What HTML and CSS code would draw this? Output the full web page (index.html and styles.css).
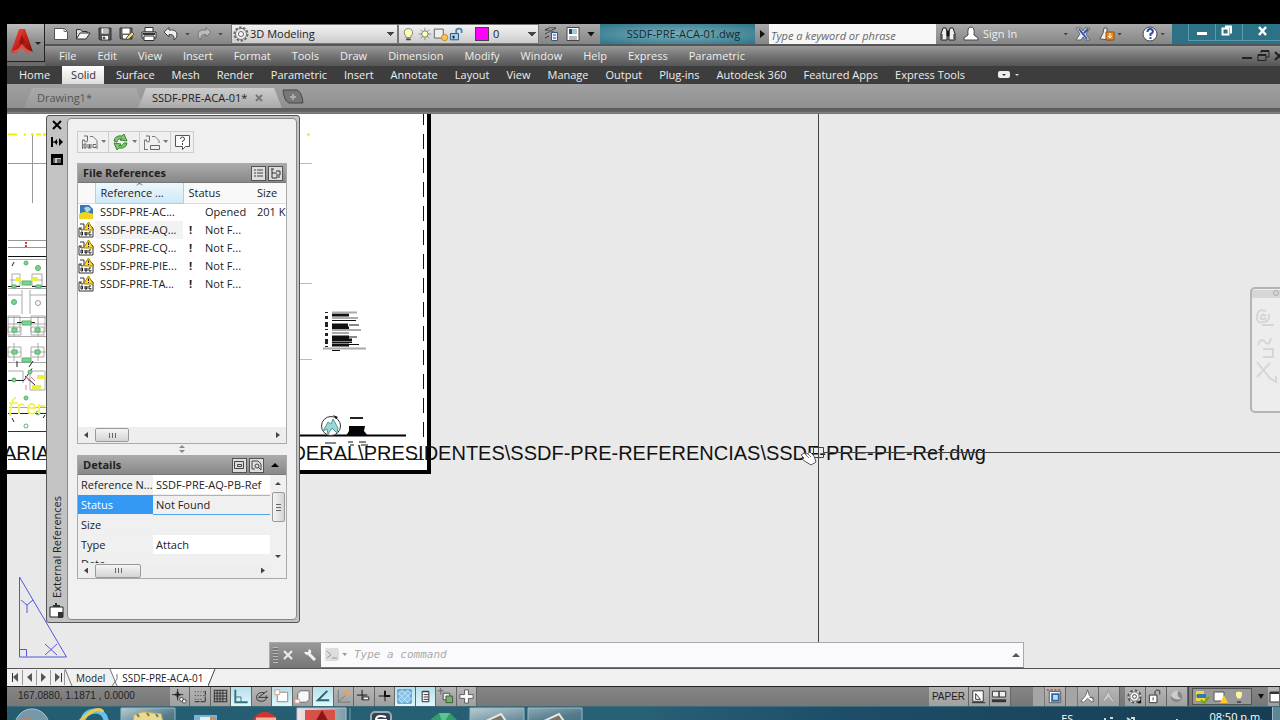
FILE: index.html
```html
<!DOCTYPE html>
<html lang="en">
<head>
<meta charset="utf-8">
<title>SSDF-PRE-ACA-01.dwg</title>
<link rel="stylesheet" href="styles.css">
</head>
<body>
<svg class="defs" width="0" height="0" aria-hidden="true">
  <symbol id="dwg" viewBox="0 0 16 16">
    <path d="M1 15V6h3M9 3h3l3 3v9H1" fill="#fff" stroke="#333"/>
    <path d="M2 2h4v4q0 2-2 2t-2-2" fill="none" stroke="#333"/>
    <path d="M3 10v3h1.500V10zM7 10v3h2v-3M8 10v3M13 10h-2v3h2v-1" fill="none" stroke="#222"/>
    <path d="M10.500 0 15.500 8h-10z" fill="#ffd91a" stroke="#a58100"/>
    <path d="M10.500 2.500v2.500M10.500 6v1" stroke="#222"/>
  </symbol>
</svg>
<div class="app">
  <header class="top">
    <button class="app-button" aria-label="Application menu">
      <svg width="36" height="34" viewBox="0 0 36 34"><defs><linearGradient id="red" x2="1" y2="1"><stop offset="0" stop-color="#ef5a48"/><stop offset=".5" stop-color="#c92018"/><stop offset="1" stop-color="#70110d"/></linearGradient></defs><path d="M12 3h6l8 23-7-3-4-4-6 8-5-1z" fill="url(#red)"/><path d="M4 25q7 0 11-7 3 5 11 8l-6 1-5-5-7 5z" fill="#de5143"/><path d="M15 9l-3 8q3 2 6 0z" fill="#8e1713"/><path d="M28 16h6l-3 3z" fill="#222"/></svg>
    </button>
    <div class="title-row">
      <div class="quick">
        <button aria-label="New"><svg viewBox="0 0 16 16"><path d="M1.500 2.500h10l3 3v8h-13z" fill="#fff" stroke="#555"/><path d="M11 2.500v3h3.500" fill="none" stroke="#777"/></svg></button>
        <button aria-label="Open"><svg viewBox="0 0 16 16"><path d="M1.500 13V3.500h4l1.500 2h5v2" fill="#ddd" stroke="#333"/><path d="M1.500 13 5 7h10l-4 6z" fill="#f8f8f8" stroke="#333"/></svg></button>
        <button aria-label="Save"><svg viewBox="0 0 16 16"><path d="M2 2h12v12H3l-1-1z" fill="#555" stroke="#333"/><path d="M4.500 2.500h7v5h-7zM5 10h6v3.500H5z" fill="#fff"/><path d="M6 11h2v2H6zM6 4h5M6 6h5" stroke="#777"/></svg></button>
        <button aria-label="Save As"><svg viewBox="0 0 16 16"><path d="M1 2h12v11H2l-1-1z" fill="#666" stroke="#333"/><path d="M3.500 2.500h7v5h-7zM4 9h6v3.500H4z" fill="#fff"/><path d="m7 14 1-3 5-5 2 2-5 5z" fill="#f1d38b" stroke="#665028"/></svg></button>
        <button aria-label="Print"><svg viewBox="0 0 16 16"><path d="M4 1.500h8V6H4z" fill="#fff" stroke="#333"/><path d="M1 6h14v6H1z" fill="#eee" stroke="#333"/><path d="M3 10h10v4.500H3z" fill="#fff" stroke="#333"/><path d="M2 8h12" stroke="#333" stroke-width="2"/></svg></button>
        <button aria-label="Undo"><svg viewBox="0 0 16 16"><path d="M1 6 6 1.500V4q8-1 8 5 0 3-3 5 1-6-5-5.500V11z" fill="#eee" stroke="#444"/></svg></button>
        <i class="dot"></i>
        <button aria-label="Redo"><svg viewBox="0 0 16 16"><path d="m15 6-5-4.500V4q-8-1-8 5 0 3 3 5-1-6 5-5.500V11z" fill="#bbb" stroke="#777"/></svg></button>
        <i class="dot"></i>
      </div>
      <div class="combo workspace">
        <svg width="18" height="18" viewBox="0 0 18 18"><circle cx="9" cy="9" r="6.500" fill="#eee" stroke="#666" stroke-width="2" stroke-dasharray="2.400 1.600"/><circle cx="9" cy="9" r="5.500" fill="#eee" stroke="#777"/><circle cx="9" cy="9" r="2.500" fill="#fff" stroke="#666"/></svg>
        <select aria-label="Workspace"><option>3D Modeling</option></select>
      </div>
      <div class="combo layer">
        <svg width="85" height="18" viewBox="0 0 85 18"><path d="M8 13q0-2-2-4-1-6 4.500-6T15 9q-2 2-2 4z" fill="#ffffb0" stroke="#777"/><path d="M8 15h5" stroke="#444" stroke-width="2"/><path d="M29 2v14M22 9h14M24 4l10 10M34 4 24 14" stroke="#888"/><circle cx="29" cy="9" r="3.500" fill="#ffffbb" stroke="#777"/><path d="M39.500 3.500h10v10h-10z" fill="#eee" stroke="#555"/><circle cx="51" cy="13" r="3.500" fill="#ffc447" stroke="#b98424"/><path d="M57.500 8.500h9v7h-9z" fill="#a9d2f1" stroke="#174c7b"/><path d="M64 8V5q0-2 3-2t3 2v3" fill="none" stroke="#4a83ae" stroke-width="2"/><path d="M61 11v3" stroke="#111" stroke-width="2"/></svg>
        <span class="swatch"></span>
        <select aria-label="Layer"><option>0</option></select>
      </div>
      <div class="quick second">
        <button aria-label="Layer properties"><svg viewBox="0 0 16 16"><path d="m2 4 4-2h7l-4 2zM2 8l4-2h5M2 12l4-2" fill="#eee" stroke="#333"/><path d="M8.500 6.500h6v8h-6z" fill="#eef" stroke="#335b7d"/><path d="M10 9h3M10 12h3" stroke="#357"/></svg></button>
        <button aria-label="Properties"><svg viewBox="0 0 16 16"><path d="M2 1.500h12v13H2z" fill="#fff" stroke="#444"/><path d="M4 3h3v5H4z" fill="#444"/><path d="M7 3h5v5H7z" fill="#9bcbe6"/><path d="M4 11h8M4 13h8" stroke="#777"/></svg></button>
        <i class="caret big"></i>
      </div>
      <div class="file-title">SSDF-PRE-ACA-01.dwg</div>
      <button class="search-arrow" aria-label="Collapse search"><svg width="14" height="20"><path d="m5 6 5 4-5 4z" fill="#111"/></svg></button>
      <input class="search" type="text" placeholder="Type a keyword or phrase" aria-label="Search">
      <div class="account">
        <button aria-label="Search"><svg viewBox="0 0 16 16"><path d="M3 2h3l1 4v8H1V8zM10 2h3l2 6v6H9V6z" fill="#eee" stroke="#222"/><path d="M7 5h2v5H7zM2 8v5M14 8v5" stroke="#222"/></svg></button>
        <button class="sign-in"><svg viewBox="0 0 16 16"><path d="M5 9Q4 1 8 1t3 8l4 3v2H1v-2z" fill="#fff" stroke="#444"/></svg>Sign In</button>
        <i class="dot"></i>
        <button aria-label="Exchange"><svg viewBox="0 0 16 16"><path d="M1 2h5l2 3 2-3h5l-4 6 4 6h-5l-2-3-2 3H1l4-6z" fill="#e9edf5" stroke="#666"/><path d="M4 3 12 13M13 3 9 7" stroke="#334eb0" stroke-width="2"/></svg></button>
        <button aria-label="Updates"><svg viewBox="0 0 16 16"><path d="M1 13 4 7l1-5h3v6l4 4v2z" fill="#eee" stroke="#555"/><path d="M7 6h8v8H7z" fill="#e78b23" stroke="#9e4e05"/><path d="M11 7v5M9 10l2 2 2-2" stroke="#fff" fill="none"/></svg></button>
        <i class="dot"></i>
        <button class="help" aria-label="Help"><svg viewBox="0 0 16 16"><circle cx="8" cy="8" r="7" fill="#fff" stroke="#444"/><path d="M5.500 6q0-3 2.700-3t2.700 2.500Q10.900 7 8.500 8v2M8.500 11v2" fill="none" stroke="#2d4cb0" stroke-width="2"/></svg></button>
        <i class="dot"></i>
      </div>
      <div class="window-buttons">
        <button aria-label="Minimize"><svg width="26" height="16"><path d="M8 8h10v3H8z" fill="#fff"/></svg></button>
        <button aria-label="Restore"><svg width="26" height="16"><path d="M9 2.500h6v7M6.500 4.500h6v6h-6z" fill="none" stroke="#fff" stroke-width="2"/></svg></button>
        <button aria-label="Close"><svg width="40" height="16"><path d="m16 3 7 8M23 3l-7 8" stroke="#fff" stroke-width="2.500"/></svg></button>
      </div>
    </div>
    <nav class="menu-row">
      <button>File</button><button>Edit</button><button>View</button><button>Insert</button><button>Format</button><button>Tools</button><button>Draw</button><button>Dimension</button><button>Modify</button><button>Window</button><button>Help</button><button>Express</button><button>Parametric</button>
      <svg class="mdi" width="38" height="18" viewBox="0 0 38 18"><path d="M0 11h10" stroke="#222" stroke-width="2"/><path d="M19 6V4h8v6h-3M16 7.500h8v6h-8z" fill="none" stroke="#222"/><path d="M16 8h8M19 4h8" stroke="#222" stroke-width="2"/><path d="m33 5 8 8M41 5l-8 8" stroke="#222" stroke-width="2"/></svg>
    </nav>
  </header>

  <nav class="ribbon">
    <button>Home</button><button class="on">Solid</button><button>Surface</button><button>Mesh</button><button>Render</button><button>Parametric</button><button>Insert</button><button>Annotate</button><button>Layout</button><button>View</button><button>Manage</button><button>Output</button><button>Plug-ins</button><button>Autodesk 360</button><button>Featured Apps</button><button>Express Tools</button>
    <svg width="26" height="12"><rect x="3" y="2" width="12" height="7" rx="2" fill="#eee"/><path d="M7 5h4l-2 2z" fill="#333"/><path d="M20 5h4l-2 2z" fill="#ddd"/></svg>
  </nav>

  <div class="doc-tabs">
    <button class="doc">Drawing1*</button>
    <button class="doc current">SSDF-PRE-ACA-01*<svg width="8" height="8"><path d="m1 1 6 6M7 1 1 7" stroke="#777" stroke-width="2"/></svg></button>
    <button class="new-doc" aria-label="New drawing"><svg width="22" height="16"><path d="M1 1h14q5 2 6 13H7Q2 12 1 1z" fill="#777" stroke="#484848"/><path d="M11 5v6M8 8h6" stroke="#aaa" stroke-width="2"/></svg></button>
  </div>

  <main class="canvas">
    <svg class="drawing" viewBox="7 114 1273 554" preserveAspectRatio="xMinYMin slice">
      <path d="M7 114h420v358H7z" fill="#fff"/>
      <g fill="none" stroke="#999">
        <path d="M8 163.500h40M32.500 135v68M8 240.500h40M8 247.500h40"/><path d="M299 163.500h13M299 283.500h13M299 359.500h13" stroke="#bbb"/>
      </g>
      <path d="M8 134.500h9M24 134.500h2M31 134.500h3M36 134.500h5M43 134.500h4M307 134.500h3" stroke="#eff000" stroke-width="2"/>
      <path d="M8 256.500h39" stroke="#111"/>
      <path d="M26 242v2M26 245v2" stroke="#e33" stroke-width="2"/>
      <path d="M8 259.500h39M8 288.500h39M8 317.500h39M8 336.500h39M8 362.500h39M12 274h8v12h-8zM32 274h10v12H32zM22 290v24M30 290v24M8 295h14M30 295h16M8 316h12v16H8zM31 316h14v16H31zM8 327h13v8H8zM31 327h13v8H31zM8 347h13v10H8zM31 347h13v10H31zM8 371h15v12M30 371h15v19H30zM9 407.500h38M10 280h10M33 280h10M8 324h13M30 324h16M8 352h13M30 352h16M14 316v20M38 316v20M14 343v18M38 343v18" fill="none" stroke="#aaa"/>
      <path d="M8 286.500h12M32 286.500h15M17 322.500h18M17 361v6M33 361l-4 6M8 380.500h16l8-12M25 376l10 9M8 413.500h39M12 266l2-4M12 418l2 4M43 418l2-3" fill="none" stroke="#222"/>
      <path d="M8 431.500h39" stroke="#333"/>
      <g fill="#74d98a" stroke="#5cae70"><circle cx="26" cy="263" r="2"/><circle cx="38" cy="268" r="2.500"/><circle cx="14" cy="302" r="2.500"/><circle cx="38" cy="303" r="2.500" fill="none" stroke="#999"/><path d="M22 281h9v4h-9zM12 285h4v3h-4zM36 285h5v3h-5zM22 321h9v4h-9zM12 328h5v4h-5zM35 328h5v4h-5zM22 358h9v4h-9zM12 350h5v4h-5zM35 350h5v4h-5z"/><circle cx="14" cy="380" r="2"/><circle cx="30" cy="372" r="2"/><circle cx="26" cy="398" r="2"/><circle cx="38" cy="413" r="2" fill="none"/><circle cx="26" cy="426" r="2" fill="none"/></g>
      <path d="M16 279h5M32 279h6M32 387h9M37 377h8" stroke="#ebef3d" stroke-width="4"/>
      <path d="M10 416q1-18 6-18M9 403h9M19 404v10M19 406q3-4 5 0M28 408h7q-1-5-4-4t-3 6 7 3M39 404v10M39 406h6" fill="none" stroke="#f3f35d" stroke-width="2"/>
      <path d="M26 376l3 5M31 377l4 4M26 385v5" stroke="#d6808e"/>
      <path d="M423.500 114v331" stroke="#111" stroke-dasharray="15 9" stroke-dashoffset="4"/>
      <path d="M429 114v360M7 472h424" fill="none" stroke="#000" stroke-width="4"/>
      <g stroke="#111" stroke-width="3"><path d="M332 315h17M332 325h16M332 328h17M332 337h17M332 340h20M332 345h17"/><path d="M332 320.500h24M349 325h10M348 337h9M332 342.500h20M349 344.500h10M332 350.500h8" stroke-width="1"/></g>
      <g stroke="#aaa" stroke-width="2"><path d="M332 312.500h25M332 318h26M332 330h29M332 333h17M323 348.500h43"/></g>
      <path d="M326.500 312v35" stroke="#222" stroke-width="3" stroke-dasharray="1 3 3 3 5 2"/>
      <path d="M299 435.500h107" stroke="#000" stroke-width="2"/>
      <circle cx="331" cy="426" r="9.500" fill="#fff" stroke="#333"/><path d="m323 431 5-9 3 2 2-5 5 9-1 5-5-5-4 6-1-5z" fill="#9ad6d4" stroke="#4b9b98"/><path d="m333 415 5 2-2 2z" fill="#111"/>
      <path d="M350 418h13" stroke="#222" stroke-width="2"/><path d="M349 426h16l-1 5 4 5h-22l3-5z" fill="#050505"/><path d="M325 443h11M348 442h5M359 442h7M350 445h4M361 445h7" stroke="#111"/>
      <path d="M8 459.500h416" stroke="#333" stroke-dasharray="17 8"/>
      <text class="model-text" x="3" y="460">ARIA</text>
      <text class="model-text" x="986" y="460" text-anchor="end">DERAL\PRESIDENTES\SSDF-PRE-REFERENCIAS\SSDF-PRE-PIE-Ref.dwg</text>
      <path d="M818.500 114v554" stroke="#444"/><path d="M824 452.500h456" stroke="#444"/><path d="M813.500 447.500h10v10h-10z" fill="none" stroke="#444"/>
      <path d="m801 455 3-2 3 1 3-2 4 4 2 6-5 3-5-3-4-3 2-1z" fill="#fff" stroke="#555"/><path d="m804 453 5 5M807 453l4 4" stroke="#777"/>
      <g fill="none" stroke="#5256dd"><path d="M19.500 577v80h47zM19.500 649.500h7v7M21 600l6 5 6-5M27 605v8M45 644l12 11M57 644l-12 11"/></g>
      <g><rect x="1251" y="288" width="40" height="124" rx="4" fill="#ededed" stroke="#b4b4b4" stroke-width="2"/><path d="M1252 290h28v8h-28z" fill="#d6d6d6"/><circle cx="1276" cy="293" r="2.500" fill="none" stroke="#aaa"/><path d="M1266 311q-8-3-9 5t7 6q6-1 5-8M1266 316q-4-3-5 1t5 1M1262 325h12M1258 345q3-8 7-3t6-4M1263 349h10v8h-10M1257 362l12 15M1270 363l-13 14M1268 377l8 5v-6" fill="none" stroke="#d6d6d6" stroke-width="2"/></g>
    </svg>

    <aside class="palette">
      <div class="palette-strip">
        <button aria-label="Close palette"><svg width="12" height="12"><path d="m2 2 8 8M10 2l-8 8" stroke="#000" stroke-width="2"/></svg></button>
        <button aria-label="Auto-hide"><svg width="12" height="12"><path d="M1 1v10" stroke="#000" stroke-width="2"/><path d="M1 6h6" stroke="#000"/><path d="M6 3v6L3 6zM8 2l4 4-4 4z" fill="#000"/></svg></button>
        <button aria-label="Palette properties"><svg width="12" height="12"><path d="M1 2h10v9H1z" fill="none" stroke="#000" stroke-width="2"/><path d="M1 4h10" stroke="#000" stroke-width="2"/><path d="M3 5v5M6 7h4M6 9h4" stroke="#000"/></svg></button>
        <span class="palette-name">External References</span>
        <svg width="16" height="16"><path d="M1 4h13v10H1z" fill="#fff" stroke="#222"/><path d="M4 4h7V2H8V0H6v2H4zM9 9h5v6H9z" fill="#333"/></svg>
      </div>
      <div class="palette-body">
        <div class="tools">
          <button aria-label="Attach DWG"><svg width="30" height="20"><path d="M4.500 17V8H7M12 4.500h3l4 4V17" fill="none" stroke="#777"/><path d="M6 4h3.500v4q0 2-1.500 2T6 8M6 12v4h2v-4zM10 12v4h3v-4M11.500 12v4M18 12.500h-3v3h3V14" fill="none" stroke="#666"/><path d="M23 8h5l-2 3z" fill="#777"/></svg></button>
          <button aria-label="Refresh"><svg width="30" height="20"><path d="M5 9q1-6 8-5l2-2 3 7-7-1 2-1Q9 6 8 10zM18 11q-1 6-8 5l-2 2-3-7 7 1-2 2q4 0 5-3z" fill="#7fc472" stroke="#3b8638"/><path d="M23 8h5l-2 3z" fill="#777"/></svg></button>
          <button aria-label="Change path"><svg width="30" height="20"><path d="M4.500 17V8H7M12 4.500h3l4 4V11M4 17.500h4" fill="none" stroke="#777"/><path d="M6 4h3.500v4q0 2-1.500 2T6 8M10.500 13.500h9v4h-9z" fill="none" stroke="#666"/><path d="M23 8h5l-2 3z" fill="#777"/></svg></button>
          <button aria-label="Help"><svg width="22" height="20"><path d="M4.500 3.500h14v11h-4l-3 3v-3h-7z" fill="#fff" stroke="#555"/><path d="M9.500 7q0-2 2-2t2 2-2 2v1M11.500 11v2" fill="none" stroke="#444"/></svg></button>
        </div>
        <section class="box refs">
          <h2>File References<span><button aria-label="List view"><svg width="13" height="13"><path d="M2 3h2M2 6h2M2 9h2M5 3h6M5 6h6M5 9h6" stroke="#444"/></svg></button><button aria-label="Tree view"><svg width="13" height="13"><path d="M3 2v9h5M3 6h5M2 2h3M7 4h4v4H7M7 10h4" fill="none" stroke="#333"/></svg></button></span></h2>
          <div class="list">
            <table>
              <thead><tr><th class="ic"></th><th class="name">Reference ...</th><th class="st">Status</th><th class="sz">Size</th></tr></thead>
              <tbody>
                <tr><td><svg width="16" height="16" viewBox="0 0 16 16"><path d="M2 1h9l4 4v10H2z" fill="#3a78b5"/><path d="M6 4q4-3 7 1-2 4-5 3z" fill="#a9d6ec"/><path d="M1 10q5-4 14 0v5H1z" fill="#f0d51f"/></svg></td><td>SSDF-PRE-AC...</td><td>Opened</td><td>201 KB</td></tr>
                <tr class="hover"><td><svg width="16" height="16"><use href="#dwg"/></svg></td><td>SSDF-PRE-AQ...</td><td><b>!</b>Not F...</td><td></td></tr>
                <tr><td><svg width="16" height="16"><use href="#dwg"/></svg></td><td>SSDF-PRE-CQ...</td><td><b>!</b>Not F...</td><td></td></tr>
                <tr><td><svg width="16" height="16"><use href="#dwg"/></svg></td><td>SSDF-PRE-PIE...</td><td><b>!</b>Not F...</td><td></td></tr>
                <tr><td><svg width="16" height="16"><use href="#dwg"/></svg></td><td>SSDF-PRE-TA...</td><td><b>!</b>Not F...</td><td></td></tr>
              </tbody>
            </table>
          </div>
          <div class="hbar"><i class="left"></i><span class="thumb"></span><i class="right"></i></div>
        </section>
        <div class="splitter"><svg width="8" height="10"><path d="M1 4l3-3 3 3zM1 6l3 3 3-3z" fill="#888"/></svg></div>
        <section class="box details">
          <h2>Details<span><button aria-label="Details view"><svg width="13" height="13"><path d="M1.500 2.500h9v7h-9zM4.500 5.500h4v2h-4z" fill="none" stroke="#444"/></svg></button><button aria-label="Preview"><svg width="13" height="13"><path d="M2 10V2h6l3 3v6M5 10H2" fill="none" stroke="#444"/><circle cx="7" cy="7" r="2" fill="none" stroke="#444"/><path d="m8 8 3 3" stroke="#444"/></svg></button><svg class="up" width="12" height="12"><path d="m2 8 4-4 4 4z" fill="#000"/></svg></span></h2>
          <div class="grid-wrap">
            <div class="grid">
              <div class="prop"><span>Reference N...</span><span class="white">SSDF-PRE-AQ-PB-Ref</span></div>
              <div class="prop sel"><span>Status</span><span>Not Found</span></div>
              <div class="prop"><span>Size</span><span></span></div>
              <div class="prop"><span>Type</span><span class="white">Attach</span></div>
              <div class="prop last"><span>Date</span><span></span></div>
            </div>
            <div class="vbar"><i class="upper"></i><span class="thumb"></span><i class="lower"></i></div>
          </div>
          <div class="hbar"><i class="left"></i><span class="thumb wide"></span><i class="right"></i></div>
        </section>
      </div>
    </aside>

    <div class="command">
      <div class="command-grip"><i class="grip"></i><button aria-label="Close"><svg width="10" height="10"><path d="m1 1 8 8M9 1 1 9" stroke="#eee" stroke-width="2"/></svg></button><button aria-label="Customize"><svg width="14" height="14"><path d="m12 12-6-6" stroke="#f2f2f2" stroke-width="3"/><path d="M3 1v3h2l1-3q4 2 1 5-4 3-6-2l2 0" fill="#f2f2f2"/></svg></button></div>
      <label for="cmd"><svg width="26" height="16"><rect x="1" y="1" width="14" height="13" rx="2" fill="#ddd"/><path d="m3 4 4 4-4 3M8 11h5" fill="none" stroke="#999"/><path d="M18 6h5l-2 3z" fill="#999"/></svg></label>
      <input id="cmd" type="text" placeholder="Type a command" aria-label="Command">
      <svg width="14" height="12"><path d="m3 8 4-4 4 4z" fill="#555"/></svg>
    </div>
  </main>

  <div class="layouts">
    <svg width="58" height="17"><path d="M15.500 1v15M29.500 1v15M43.500 1v15M57.500 1v15" stroke="#999"/><path d="M5.500 4v9M54.500 4v9" stroke="#333"/><path d="m11 4-5 4 5 5zM25 4l-5 4 5 5zM34 4l5 4-5 5zM48 4l5 4-5 5z" fill="#555"/></svg>
    <svg width="8" height="17"><path d="m0 0 7 17" stroke="#777"/></svg>
    <button class="layout model">Model</button>
    <svg width="10" height="17"><path d="M1 0h9v17H8z" fill="#fff"/><path d="m1 0 7 17M8 5v5l-5 7" fill="none" stroke="#777"/></svg>
    <button class="layout active">SSDF-PRE-ACA-01</button>
    <svg width="8" height="17"><path d="M0 0h7L0 17z" fill="#fff"/><path d="M0 17 7 0" stroke="#444"/></svg>
  </div>

  <footer class="status">
    <span class="coords">167.0880, 1.1871 , 0.0000</span>
    <div class="toggles">
      <button aria-label="Infer"><svg viewBox="0 0 20 20"><path d="M2 8h12M8 2v12" stroke="#333"/><path d="M5 8h6M8 5v6" stroke="#222" stroke-width="2"/><circle cx="12" cy="13" r="2" fill="#eee" stroke="#444"/><circle cx="15" cy="15" r="2" fill="#eee" stroke="#444"/></svg></button>
      <button aria-label="Snap"><svg viewBox="0 0 20 20"><path d="M4 5h10M4 9h10M4 13h8" stroke="#333" stroke-dasharray="1 2"/><path d="M4 15.500h11M15 4v11" stroke="#222" stroke-dasharray="5 1"/></svg></button>
      <button aria-label="Grid"><svg viewBox="0 0 20 20"><path d="M3 3.500h14M3 6.500h14M3 9.500h14M3 12.500h14M3 15.500h14M3.500 3v13M6.500 3v13M9.500 3v13M12.500 3v13M16.500 3v13" stroke="#333"/></svg></button>
      <button class="lit" aria-label="Ortho"><svg viewBox="0 0 20 20"><path d="M3.500 3v13h13" fill="none" stroke="#357280" stroke-width="2"/><path d="M3.500 10.500h6v5" fill="none" stroke="#357280"/></svg></button>
      <button aria-label="Polar"><svg viewBox="0 0 20 20"><path d="m16 4-9 7h10M13 6q-7-1-8 4t5 5 5-6" fill="none" stroke="#333"/></svg></button>
      <button class="lit" aria-label="Osnap"><svg viewBox="0 0 20 20"><path d="M4.500 5.500h11v10h-11z" fill="#fff" stroke="#888"/><path d="M2 3h5v5H2z" fill="#fff" stroke="#e09b81"/></svg></button>
      <button aria-label="3D Osnap"><svg viewBox="0 0 20 20"><path d="m5 7 3-3h9v9l-3 3H5z" fill="#f8f8f8" stroke="#666"/><path d="M2 13h5v4H2z" fill="#fff" stroke="#e09b81"/></svg></button>
      <button class="lit" aria-label="Tracking"><svg viewBox="0 0 20 20"><path d="M14 4 4 14h12" fill="none" stroke="#286274" stroke-width="2"/></svg></button>
      <button aria-label="UCS"><svg viewBox="0 0 20 20"><path d="M4.500 3v13H17M4 16l8-7" fill="none" stroke="#777"/><path d="m12 3 4 2-2 5-3-2z" fill="#f2a047"/></svg></button>
      <button aria-label="Dynamic input"><svg viewBox="0 0 20 20"><path d="M3 8.500h11M8.500 3v11" stroke="#111"/><path d="M9.500 10.500h6v3h-6z" fill="#fff" stroke="#222"/></svg></button>
      <button aria-label="Line weight"><svg viewBox="0 0 20 20"><path d="M4 9.500h7M10.500 4v11" stroke="#111"/><path d="M10 9.500h6M10.500 10V4" stroke="#111" stroke-width="2"/></svg></button>
      <button class="lit" aria-label="Transparency"><svg viewBox="0 0 20 20"><path d="M3 3h14v14H3z" fill="#8ac3e6" stroke="#3b82ba"/><path d="m3 6 11 11M3 12l5 5M7 3l10 10M13 3l4 4M3 8l5-5M3 14 14 3M6 17 17 6M12 17l5-5" stroke="#c1e4f4"/></svg></button>
      <button class="lit" aria-label="Quick properties"><svg viewBox="0 0 20 20"><path d="M6.500 4.500h7v11h-7z" fill="#fff" stroke="#222"/><path d="M7 5h6M8 8h5M8 10.500h5M8 13h5" stroke="#333"/></svg></button>
      <button aria-label="Cycling"><svg viewBox="0 0 20 20"><path d="M2 4h6M5 1v7" stroke="#666"/><path d="M7.500 6.500h7v7h-7z" fill="#eee" stroke="#444"/><path d="M10.500 9.500h7v7h-7z" fill="#7aaa70" stroke="#365f35"/></svg></button>
      <button aria-label="Monitor"><svg viewBox="0 0 20 20"><path d="M8 3h4v5h5v4h-5v5H8v-5H3V8h5z" fill="#fff" stroke="#555"/></svg></button>
    </div>
    <div class="status-right">
      <button class="paper">PAPER</button>
      <button aria-label="Layout"><svg viewBox="0 0 20 20"><path d="M4 4h11v11H4z" fill="#fff" stroke="#333"/><path d="M7 7v6h5z" fill="none" stroke="#333"/><path d="M3 16.500h14" stroke="#222"/></svg></button>
      <button aria-label="Drawings"><svg viewBox="0 0 20 20"><path d="M2.500 4.500h7v6h-7zM9.500 4.500h7v6h-7z" fill="#eee" stroke="#333"/><path d="M2 14.500h15" stroke="#333" stroke-width="3"/></svg></button>
      <i class="gap wide-gap"></i><i class="pad"></i>
      <button aria-label="Viewport"><svg viewBox="0 0 20 20"><path d="M2 3h15" stroke="#c04b67" stroke-dasharray="2 2" stroke-width="2"/><path d="M4.500 4.500v12h12V5z" fill="#fff" stroke="#555"/><path d="M7.500 7.500h7v7h-7z" fill="#b9dff1" stroke="#2e66af" stroke-width="2"/></svg></button>
      <i class="pad"></i>
      <button aria-label="Annotation visibility"><svg viewBox="0 0 20 20"><path d="m10 3 2 6 5 5-2 2-5-4-4 4-3-1 5-6z" fill="#fff" stroke="#666"/><path d="M12 11h4v5" stroke="#337ba9" fill="none"/></svg></button>
      <button aria-label="Annotation scale"><svg viewBox="0 0 20 20"><path d="m10 3 2 6 4 6-2 1-4-5-5 5-1-2 4-6z" fill="#ccc" stroke="#999"/></svg></button>
      <i class="gap"></i>
      <button aria-label="Workspace"><svg viewBox="0 0 20 20"><circle cx="10" cy="10" r="6.500" fill="#fff" stroke="#555" stroke-width="2" stroke-dasharray="3 2"/><circle cx="10" cy="10" r="5" fill="#eee" stroke="#555"/><circle cx="10" cy="10" r="2" fill="#fff" stroke="#444"/><path d="M17 13v4h-4z" fill="#111"/></svg></button>
      <button aria-label="Lock UI"><svg viewBox="0 0 20 20"><path d="M3.500 8.500h8v8h-8z" fill="#fff" stroke="#333"/><path d="M9.500 8V5q1-3 5-1v4M7.500 11v3" fill="none" stroke="#333"/></svg></button>
      <button aria-label="Isolate"><svg viewBox="0 0 20 20"><circle cx="10" cy="10" r="6" fill="#888"/><path d="M4 9q2-6 8-5-3 6 3 8-7 3-11-3" fill="#ccc"/></svg></button>
      <div class="tray"><svg width="58" height="16"><path d="M3 2h8v4H3zM3 8h9v4H3z" fill="#f4d641"/><path d="M4 5h9v4H4z" fill="#307aaf"/><path d="m8 11 3 3 5-6" stroke="#69a818" stroke-width="2" fill="none"/><path d="M21 3h10v9H21z" fill="#fff" stroke="#555"/><path d="m31 6 4 8h-8z" fill="#ffc72d"/><path d="M44 10q-4-8 2-8t2 8z" fill="#fff3a1" stroke="#999"/><path d="M44 13h4" stroke="#555" stroke-width="2"/></svg></div>
      <i class="caret status-caret"></i>
      <button class="clean" aria-label="Clean screen"><svg width="12" height="20"><path d="M2 5h12v10H2z" fill="#fff" stroke="#333"/><path d="M2 6h12" stroke="#333" stroke-width="2"/></svg></button>
    </div>
  </footer>

  <div class="taskbar">
    <svg class="task-icons" width="600" height="24">
      <defs><linearGradient id="glass" x2="1" y2="1"><stop offset="0" stop-color="#b9ccd2"/><stop offset=".6" stop-color="#557c8c"/><stop offset="1" stop-color="#37677b"/></linearGradient><linearGradient id="glass2" x2="1"><stop offset="0" stop-color="#f5e4e4"/><stop offset="1" stop-color="#7c9ba6"/></linearGradient></defs>
      <circle cx="25" cy="19" r="17" fill="#7798a9" stroke="#adc5cf"/><path d="M14 14q5-5 10-2l-1 10-9-2z" fill="#dc7a4e"/><path d="M26 12q5 3 10 1v9H25z" fill="#95b354"/>
      <path d="M75 20q0-16 14-16 10 0 11 15" fill="none" stroke="#65c2ec" stroke-width="5"/><path d="M73 14Q91-3 96 5" fill="none" stroke="#efc94b" stroke-width="3"/>
      <path d="M114 1h54v23h-54z" fill="url(#glass)" stroke="#98b8c3"/><path d="m127 8 9-3 18 2 3 13h-31z" fill="#eed88c" stroke="#d1b460"/><path d="m130 7 2 3M140 6l2 3M149 7l2 3" stroke="#54847a" stroke-width="2"/>
      <path d="M187 8h23v16h-23z" fill="#78b4d6"/><path d="M193 10h10v12h-10z" fill="#e7eef2"/><path d="M203 10h6v10h-6z" fill="#dd8a50"/>
      <circle cx="258" cy="18" r="13" fill="#d6342b"/><path d="M249 12h20" stroke="#f2b6a7" stroke-width="3"/>
      <path d="M290 1h49v23h-49z" fill="url(#glass2)" stroke="#adc7d0"/><path d="M298 3h30v21h-30z" fill="#d7504a"/><path d="m306 19 9-16 9 16z" fill="#8d1515"/><path d="M343 1v20" stroke="#7da3b0"/>
      <rect x="364" y="5" width="20" height="18" rx="4" fill="#35414d" stroke="#9caab4" stroke-width="2"/><path d="M379 10q-10-3-10 3h11" fill="none" stroke="#fff" stroke-width="2"/>
      <path d="m424 12 8-6h11l8 8-6 8h-18z" fill="#359b6d"/><path d="m432 6 4 11 7-11z" fill="#5bc58f"/>
      <path d="M463 1h54v23h-54zM521 1h54v23h-54z" fill="url(#glass)" stroke="#9cbac4"/><path d="m479 14 15-7 9 13zM537 14l15-7 9 13z" fill="#79766b" stroke="#e7e7df" stroke-width="2"/>
    </svg>
    <span class="lang">ES</span>
    <svg class="tray-icons" width="90" height="14"><path d="M8 11v3M13 11h3M30 11l4 3M34 11h3v3M80 12v2" stroke="#cbd8de" stroke-width="2"/></svg>
    <span class="clock">08:50 p.m.</span>
    <span class="desktop"></span>
  </div>
</div>
</body>
</html>
```
FILE: styles.css
```css
* { box-sizing: border-box; }
body { margin: 0; background: #000; font: 11px/16px "Open Sans", "Noto Sans", sans-serif; color: #222; }
button, input, select { font: inherit; color: inherit; border: 0; border-radius: 0; background: none; padding: 0; margin: 0; }
svg { display: block; flex: none; }
.defs { position: absolute; }
.app { display: flex; flex-direction: column; height: 100vh; padding: 24px 0 0 7px; overflow: hidden; }

/* Title and menus */
.top { display: grid; grid-template: 22px 20px / 38px minmax(0, 1fr); background: #6a6a6a; flex: none; }
.app-button { grid-row: 1 / 3; height: 38px; background: linear-gradient(#bdbdbd, #8b8b8b 50%, #777); border-right: 1px solid #222; border-bottom: 1px solid #222; }
.title-row { display: flex; align-items: stretch; background: linear-gradient(#aaa, #858585); border-bottom: 2px solid #555; min-width: 0; }
.quick, .account { display: flex; align-items: center; flex: none; }
.quick { width: 186px; padding-left: 8px; gap: 6px; }
.quick svg, .account svg { width: 16px; height: 16px; }
.dot { width: 5px; height: 3px; background: #444; clip-path: polygon(0 0, 100% 0, 50% 100%); margin: 0 3px; flex: none; }
.quick .dot { margin: 0; }
.second { width: 61px; padding-left: 4px; }
.caret { width: 8px; height: 5px; background: #111; clip-path: polygon(0 0, 100% 0, 50% 100%); flex: none; }
.combo { display: flex; align-items: center; background: linear-gradient(#f2f2f2, #ccc); border: 1px solid #777; flex: none; }
.combo select { appearance: none; flex: 1; min-width: 0; height: 18px; background: linear-gradient(45deg, #0000 50%, #444 50%) right 6px center / 4px 4px no-repeat, linear-gradient(-45deg, #0000 50%, #444 50%) right 2px center / 4px 4px no-repeat; }
.workspace { width: 167px; }
.layer { width: 141px; }
.layer svg { width: 76px; }
.swatch { width: 14px; height: 14px; background: #f0f; border: 1px solid #444; margin-right: 4px; }
.file-title { flex: 1; min-width: 0; text-align: center; line-height: 20px; padding-left: 12px; background: radial-gradient(ellipse at center, #7badb8, #4c8c9d 60%, #2c7689); color: #122b33; white-space: nowrap; }
.search { width: 167px; background: #f7f7f7; font-style: italic; padding: 4px 2px 0; }
.search::placeholder { color: #666; opacity: 1; }
.account { width: 236px; padding-left: 4px; }
.account .dot { margin: 0 2px; }
.sign-in { display: flex; align-items: center; gap: 4px; color: #eee; margin: 0 44px 0 7px; }
.account button + button { flex: none; }
.account button + .dot + button:not(.help) { margin: 0 8px 0 5px; }
.account .help { margin-left: 18px; }
.window-buttons { display: flex; width: 108px; background: #2b7287; padding-left: 16px; flex: none; overflow: hidden; }
.window-buttons button { height: 17px; border: 1px solid #5c9aab; border-top: 0; border-right: 0; }
.menu-row { display: flex; align-items: center; gap: 21px; padding: 0 0 0 14px; color: #eee; background: linear-gradient(#999, #747474 50%, #555); }
.mdi { margin-left: auto; }
.ribbon { display: flex; align-items: center; height: 18px; padding-left: 3px; background: #3d3d3d; color: #eee; flex: none; }
.ribbon button { height: 18px; padding: 0 8px 0 9px; }
.ribbon .on { background: linear-gradient(#fff, #ddd); color: #333; margin: 0 3px 0 4px; }
.ribbon svg { margin-left: 22px; }

/* Drawing tabs */
.doc-tabs { display: flex; align-items: flex-end; height: 30px; flex: none; padding: 0 0 6px 17px; background: linear-gradient(#a0a0a0, #909090 24px, #5a5a5a 24px, #646464 28px, #999 29px, #555); }
.doc { height: 20px; width: 120px; text-align: left; padding-left: 13px; color: #555; background: linear-gradient(#aaa, #999); clip-path: polygon(8px 0, calc(100% - 8px) 0, 100% 100%, 0 100%); }
.doc.current { display: flex; align-items: center; gap: 8px; width: 144px; margin-left: -6px; padding-left: 14px; color: #222; background: linear-gradient(#ccc, #aaa); }
.new-doc { padding: 0 0 3px; }

/* Model area */
.canvas { position: relative; flex: 1; min-height: 0; background: #e9e9ea; overflow: hidden; }
.drawing { position: absolute; inset: 0; width: 100%; height: 100%; }
.model-text { font: 20px "Liberation Sans", Arial, sans-serif; fill: #111; }
.palette { position: absolute; left: 39px; top: 1px; width: 254px; height: 508px; display: flex; background: #c3c3c3; border: 1px solid #555; border-radius: 3px; padding: 2px 2px 2px 0; }
.palette-strip { width: 20px; display: flex; flex-direction: column; align-items: center; gap: 5px; padding: 1px 0 1px; }
.palette-name { writing-mode: vertical-rl; transform: rotate(180deg); margin-top: auto; white-space: nowrap; }
.palette-body { flex: 1; min-width: 0; display: flex; flex-direction: column; background: #f0f0f0; border: 1px solid #888; border-radius: 4px; padding: 12px 9px 40px; }
.tools { display: flex; align-self: flex-start; border: 1px solid #ccc; margin-bottom: 10px; }
.tools button + button { border-left: 1px solid #ccc; }
.box { border: 1px solid #aaa; display: flex; flex-direction: column; min-height: 0; }
.refs { flex: 1; }
.box h2 { display: flex; align-items: center; justify-content: space-between; flex: none; height: 19px; margin: 0; padding: 0 2px 0 5px; font-size: 11px; font-weight: 700; background: linear-gradient(#aaa, #888); border-bottom: 1px solid #777; }
.box h2 span { display: flex; align-items: center; gap: 1px; }
.box h2 button { border: 1px solid #555; background: #ddd; margin-right: 1px; }
.box h2 .up { margin: 0 3px; }
.list { flex: 1; min-height: 0; background: #fff; overflow: hidden; }
table { border-collapse: collapse; table-layout: fixed; width: 222px; white-space: nowrap; }
th { font-weight: 400; text-align: left; height: 20px; padding: 0 0 0 5px; background: #f9f9f9; border-bottom: 1px solid #ddd; }
th.ic { width: 17px; }
th.name { width: 88px; background: linear-gradient(#edf7fd, #cfe8f6); border: 1px solid #a9d3e8; border-top: 0; position: relative; }
th.st { width: 69px; }
th.name::after { content: ""; position: absolute; left: 40px; top: -1px; width: 8px; height: 4px; background: #778d99; clip-path: polygon(50% 0, 100% 100%, 50% 50%, 0 100%); }
td { height: 18px; padding: 0 0 0 5px; overflow: hidden; }
td:first-child { padding: 0; }
td:nth-child(3) { padding-left: 22px; position: relative; }
td b { position: absolute; left: 6px; font-weight: 700; }
.hover td:nth-child(2) { background: #f2f2f2; }
.hbar { display: flex; align-items: center; flex: none; height: 16px; padding: 0 6px; background: #eee; }
.hbar i { width: 4px; height: 6px; background: #444; }
.left { clip-path: polygon(100% 0, 100% 100%, 0 50%); }
.right { clip-path: polygon(0 0, 100% 50%, 0 100%); margin-left: auto; }
.thumb { display: flex; align-items: center; justify-content: center; border: 1px solid #999; border-radius: 2px; background: linear-gradient(#f5f5f5, #d4d4d4); }
.thumb::before { content: ""; width: 7px; height: 5px; background: repeating-linear-gradient(90deg, #666 0 1px, #0000 1px 3px); }
.hbar .thumb { width: 34px; height: 14px; margin-left: 7px; }
.hbar .wide { width: 46px; }
.splitter { height: 11px; display: flex; justify-content: center; flex: none; }
.grid-wrap { display: flex; height: 88px; overflow: hidden; }
.grid { flex: 1; min-width: 0; }
.prop { display: grid; grid-template-columns: 75px 1fr; height: 20px; line-height: 19px; white-space: nowrap; }
.prop span { padding-left: 3px; border-bottom: 1px solid #eee; overflow: hidden; }
.prop .white { background: #fff; }
.prop.sel span:first-child { background: #3399f3; color: #fff; }
.prop.sel span:last-child { border-top: 1px solid #8abde6; border-bottom: 1px solid #55a5e2; line-height: 17px; }
.prop.last { line-height: 17px; }
.vbar { width: 16px; display: flex; flex-direction: column; align-items: center; padding: 7px 0 5px; }
.vbar i { width: 6px; height: 3px; background: #444; }
.upper { clip-path: polygon(50% 0, 100% 100%, 0 100%); }
.lower { clip-path: polygon(0 0, 100% 0, 50% 100%); margin-top: auto; }
.vbar .thumb { width: 13px; height: 30px; margin-top: 7px; background: linear-gradient(90deg, #f5f5f5, #d4d4d4); }
.vbar .thumb::before { width: 5px; height: 7px; background: repeating-linear-gradient(#666 0 1px, #0000 1px 3px); }
.details .hbar { margin-right: 15px; height: 15px; }

/* Command line */
.command { position: absolute; left: 262px; right: 256px; bottom: 0; height: 26px; display: flex; align-items: center; background: #fafafc; border: 1px solid #aaa; border-bottom-color: #777; }
.command-grip { align-self: stretch; width: 51px; display: flex; align-items: center; gap: 10px; padding-left: 3px; background: linear-gradient(#999, #777); flex: none; }
.grip { width: 5px; height: 16px; background: repeating-linear-gradient(#bbb 0 1px, #777 1px 3px); margin-right: -5px; }
.command label { margin: 0 0 0 3px; }
.command input { flex: 1; min-width: 0; margin-left: 4px; font: italic 11px/16px "DejaVu Sans Mono", monospace; }
.command input::placeholder { color: #aaa; opacity: 1; }

/* Layout tabs and status bar */
.layouts { height: 18px; display: flex; background: #f0f0f0; border-top: 1px solid #555; flex: none; overflow: hidden; }
.layout { height: 17px; font-size: 10px; line-height: 16px; white-space: nowrap; }
.model { padding: 0 4px 0 3px; }
.active { background: #fff; padding: 0 5px 0 3px; }
.status { display: flex; align-items: stretch; height: 20px; background: linear-gradient(#858585, #777); border-top: 1px solid #222; flex: none; overflow: hidden; }
.coords { width: 163px; padding-left: 11px; font: 10px/18px "Liberation Sans", Arial, sans-serif; white-space: nowrap; flex: none; }
.toggles { display: flex; width: 307px; flex: none; }
.toggles button { flex: 1; min-width: 0; display: flex; justify-content: center; }
.status button { background: linear-gradient(#b5b5b5, #a0a0a0); border-right: 1px solid #666; height: 19px; }
.status .lit { background: linear-gradient(#b8dfea, #dff8fc); }
.status button svg { width: 19px; height: 19px; }
.status-right { margin-left: auto; display: flex; flex: none; }
.status-right button { width: 21px; }
.status-right .paper { width: 40px; font: 10px/18px "Liberation Sans", Arial, sans-serif; }
.gap { width: 5px; }
.wide-gap { width: 22px; }
.pad { width: 12px; background: #a5a5a5; border-right: 1px solid #777; }
.tray { width: 66px; padding: 1px 3px; border-left: 1px solid #444; }
.tray svg { border: 1px solid #555; background: #999; width: 60px; height: 17px; }
.status-caret { align-self: center; margin: 0 4px; width: 6px; }
.status-right .clean { width: 12px; overflow: hidden; }
.taskbar { position: relative; display: flex; height: 14px; overflow: hidden; background: linear-gradient(90deg, #245c70, #286076 50%, #1d4d68 66%, #173d52); border-top: 1px solid #3d6c78; color: #fff; flex: none; }
.lang { margin-left: auto; line-height: 24px; }
.lang, .clock { flex: none; white-space: nowrap; }
.tray-icons { margin: 0 22px 0 24px; }
.clock { line-height: 20px; margin-right: 9px; }
.desktop { width: 8px; background: #5d8796; border-left: 1px solid #9fb8c2; }
```
